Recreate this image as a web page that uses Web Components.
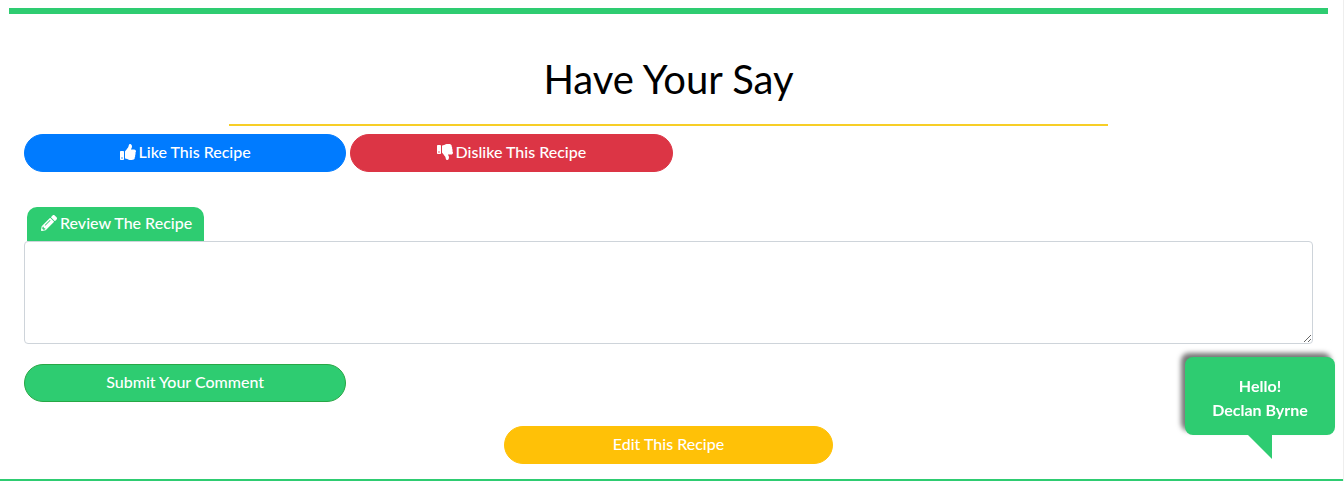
<!DOCTYPE html>
<html lang="en">
<head>
<meta charset="utf-8">
<title>Recipe feedback</title>
<style>
  html { height: 100%; }
  body { margin: 0; min-height: 100%; box-sizing: border-box; background: #fff; border-right: 1px solid #eee; color: #000; font: 16px/24px Lato, "Open Sans", sans-serif; }
</style>
</head>
<body>
<recipe-feedback></recipe-feedback>
<speech-bubble><span>Hello!</span><span>Declan Byrne</span></speech-bubble>

<script>
const ICONS = {
  up: "M104 224H24c-13.255 0-24 10.745-24 24v240c0 13.255 10.745 24 24 24h80c13.255 0 24-10.745 24-24V248c0-13.255-10.745-24-24-24zM64 472c-13.255 0-24-10.745-24-24s10.745-24 24-24 24 10.745 24 24-10.745 24-24 24zM384 81.452c0 42.416-25.97 66.208-33.277 94.548h101.723c33.397 0 59.397 27.746 59.553 58.098.084 17.938-7.546 37.249-19.439 49.197l-.11.11c9.836 23.337 8.237 56.037-9.308 79.469 8.681 25.895-.069 57.704-16.382 74.757 4.298 17.598 2.244 32.575-6.148 44.632C440.202 511.587 389.616 512 346.839 512l-2.845-.001c-48.287-.017-87.806-17.598-119.56-31.725-15.957-7.099-36.821-15.887-52.651-16.178-6.54-.12-11.783-5.457-11.783-11.998v-213.77c0-3.2 1.282-6.271 3.558-8.521 39.614-39.144 56.648-80.587 89.117-113.111 14.804-14.832 20.188-37.236 25.393-58.902C282.515 39.293 291.817 0 312 0c24 0 72 8 72 81.452z",
  down: "M0 56v240c0 13.255 10.745 24 24 24h80c13.255 0 24-10.745 24-24V56c0-13.255-10.745-24-24-24H24C10.745 32 0 42.745 0 56zm40 200c0-13.255 10.745-24 24-24s24 10.745 24 24-10.745 24-24 24-24-10.745-24-24zm272 256c-20.183 0-29.485-39.293-33.931-57.795-5.206-21.666-10.589-44.07-25.393-58.902-32.469-32.524-49.503-73.967-89.117-113.111a11.98 11.98 0 0 1-3.558-8.521V59.901c0-6.541 5.243-11.878 11.783-11.998 15.831-.29 36.694-9.079 52.651-16.178C256.189 17.598 295.709.017 343.995 0h2.844c42.777 0 93.363.413 113.774 29.737 8.392 12.057 10.446 27.034 6.148 44.632 16.312 17.053 25.063 48.863 16.382 74.757 17.544 23.432 19.143 56.132 9.308 79.469l.11.11c11.893 11.949 19.523 31.259 19.439 49.197-.156 30.352-26.157 58.098-59.553 58.098H350.723C358.03 364.34 384 388.132 384 430.548 384 504 336 512 312 512z",
  pencil: "M497.9 142.1l-46.1 46.1c-4.7 4.7-12.3 4.7-17 0l-111-111c-4.7-4.7-4.7-12.3 0-17l46.1-46.1c18.7-18.7 49.1-18.7 67.9 0l60.1 60.1c18.8 18.7 18.8 49.1 0 67.9zM284.2 99.8L21.6 362.4.4 483.9c-2.9 16.4 11.4 30.6 27.8 27.8l121.5-21.3 262.6-262.6c4.7-4.7 4.7-12.3 0-17l-111-111c-4.8-4.7-12.4-4.7-17.1 0zM124.1 339.9c-5.5-5.5-5.5-14.3 0-19.8l154-154c5.5-5.5 14.3-5.5 19.8 0s5.5 14.3 0 19.8l-154 154c-5.5 5.5-14.3 5.5-19.8 0zM88 424h48v36.3l-64.5 11.3-31.1-31.1L51.7 376H88v48z"
};

function define(name, html) {
  customElements.define(name, class extends HTMLElement {
    constructor() {
      super();
      this.attachShadow({ mode: "open" }).innerHTML = html;
    }
  });
}

customElements.define("app-icon", class extends HTMLElement {
  connectedCallback() {
    if (this.shadowRoot) return;
    this.attachShadow({ mode: "open" }).innerHTML = `
      <style>
        :host { display: block; width: 16px; height: 16px; flex: none; }
        svg { display: block; width: 100%; height: 100%; fill: currentColor; }
      </style>
      <svg viewBox="0 0 512 512" aria-hidden="true"><path d="${ICONS[this.getAttribute("name")]}"/></svg>`;
  }
});

define("pill-button", `
  <style>
    :host { display: block; }
    button { display: flex; align-items: center; justify-content: center; gap: 3px; width: 100%; box-sizing: border-box; margin: 0; padding: 5px 12px 7px; border: 1px solid var(--edge, var(--fill)); border-radius: 19px; background: var(--fill); color: #fff; font: inherit; font-weight: 500; cursor: pointer; }
  </style>
  <button type="button"><slot name="icon"></slot><span><slot></slot></span></button>`);

define("section-title", `
  <style>
    :host { display: block; }
    h1 { margin: 0 auto; width: 66.67%; box-sizing: border-box; padding-bottom: 21px; border-bottom: 2px solid #f7ce26; text-align: center; font-size: 40px; line-height: 48px; font-weight: 400; }
  </style>
  <h1><slot></slot></h1>`);

define("review-field", `
  <style>
    :host { display: block; }
    label { display: flex; align-items: center; gap: 3px; width: max-content; box-sizing: border-box; margin-left: 3px; padding: 4px 12px 6px 14px; border-radius: 10px 10px 0 0; background: #2ecc71; color: #fff; font-weight: 500; }
    textarea { display: block; width: 100%; height: 103px; box-sizing: border-box; margin: 0; padding: 6px 12px; border: 1px solid #ced4da; border-radius: 4px; background: #fff; font: inherit; resize: vertical; }
  </style>
  <label for="review"><app-icon name="pencil"></app-icon><slot></slot></label>
  <textarea id="review"></textarea>`);

define("recipe-feedback", `
  <style>
    :host { display: block; padding-top: 8px; border-bottom: 2px solid #2ecc71; }
    main { margin: 0 15px 0 9px; padding: 41px 0 15px; border-top: 6px solid #2ecc71; }
    .body { padding: 0 15px; }
    .votes { display: flex; gap: 4px; margin: 8px 0 35px; }
    .quarter { width: 25%; }
    .submit { --fill: #2ecc71; --edge: #28a745; margin-top: 20px; }
    .edit { --fill: #ffc107; margin: 24px auto 0; }
    .like { --fill: #007bff; }
    .dislike { --fill: #dc3545; }
  </style>
  <main>
    <section-title>Have Your Say</section-title>
    <div class="body">
      <div class="votes">
        <pill-button class="quarter like"><app-icon slot="icon" name="up"></app-icon>Like This Recipe</pill-button>
        <pill-button class="quarter dislike"><app-icon slot="icon" name="down"></app-icon>Dislike This Recipe</pill-button>
      </div>
      <review-field>Review The Recipe</review-field>
      <pill-button class="quarter submit">Submit Your Comment</pill-button>
    </div>
    <pill-button class="quarter edit">Edit This Recipe</pill-button>
  </main>`);

define("speech-bubble", `
  <style>
    :host { display: block; position: fixed; right: 9px; bottom: 22px; width: 150px; color: #fff; font-weight: 700; text-align: center; }
    .box { display: flex; flex-direction: column; padding: 17px 10px 13px; border-radius: 8px; background: #2ecc71; box-shadow: -4px -4px 5px #777; }
    svg { display: block; width: 24px; height: 24px; margin-left: 63px; fill: #2ecc71; }
  </style>
  <div class="box"><slot></slot></div>
  <svg viewBox="0 0 24 24" aria-hidden="true"><path d="M0 0h24v24z"/></svg>`);
</script>
</body>
</html>
